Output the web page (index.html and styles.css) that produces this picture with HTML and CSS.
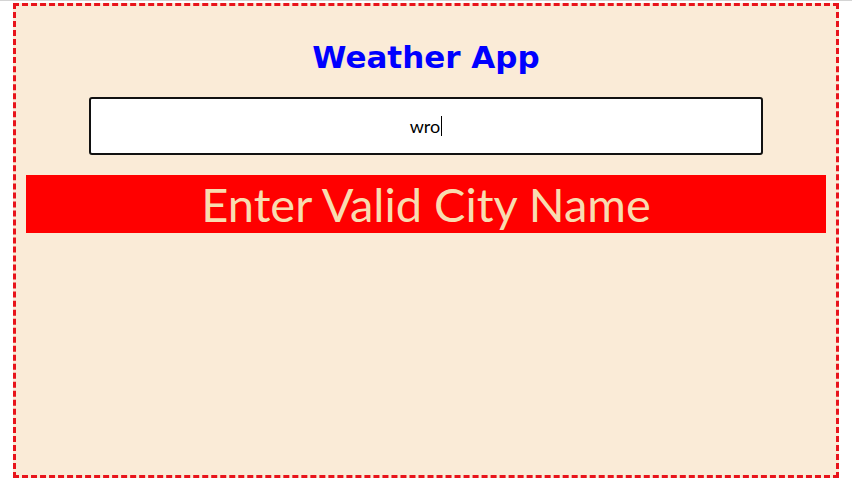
FILE: index.html
```html
<!DOCTYPE html>
<html lang="en">
<head>
<meta charset="utf-8">
<title>Weather App</title>
<link rel="stylesheet" href="styles.css">
</head>
<body>
<div class="app">
  <h1 class="title">Weather App</h1>
  <div class="search"><span class="search-text">wro</span><span class="caret"></span></div>
  <div class="error">Enter Valid City Name</div>
</div>
</body>
</html>
```

FILE: styles.css
```css
html, body {
  background: #ffffff;
}
body {
  margin: 0;
  border-top: 1px solid #d4d4d4;
  padding: 2px 13px 0 13px;
}
.app {
  box-sizing: border-box;
  height: 475px;
  border: 3px dashed #e8141b;
  background: #faebd7;
  display: flex;
  flex-direction: column;
  align-items: center;
  padding-top: 31px;
}
.title {
  margin: 0;
  font-family: "DejaVu Sans", Verdana, sans-serif;
  font-weight: bold;
  font-size: 31px;
  line-height: 40px;
  color: #0000ff;
}
.search {
  box-sizing: border-box;
  margin-top: 20px;
  width: 674px;
  height: 58px;
  border: 2px solid #111111;
  border-radius: 3px;
  background: #ffffff;
  display: flex;
  align-items: center;
  justify-content: center;
  font-family: "Lato", "Open Sans", sans-serif;
  font-size: 18px;
  color: #000000;
}
.caret {
  display: inline-block;
  width: 1px;
  height: 20px;
  background: #000;
  margin-left: 1px;
}
.error {
  margin-top: 20px;
  width: 800px;
  height: 58px;
  background: #ff0000;
  color: #f8dcb0;
  font-family: "Lato", "Open Sans", sans-serif;
  font-size: 47px;
  line-height: 58px;
  text-align: center;
}
```
